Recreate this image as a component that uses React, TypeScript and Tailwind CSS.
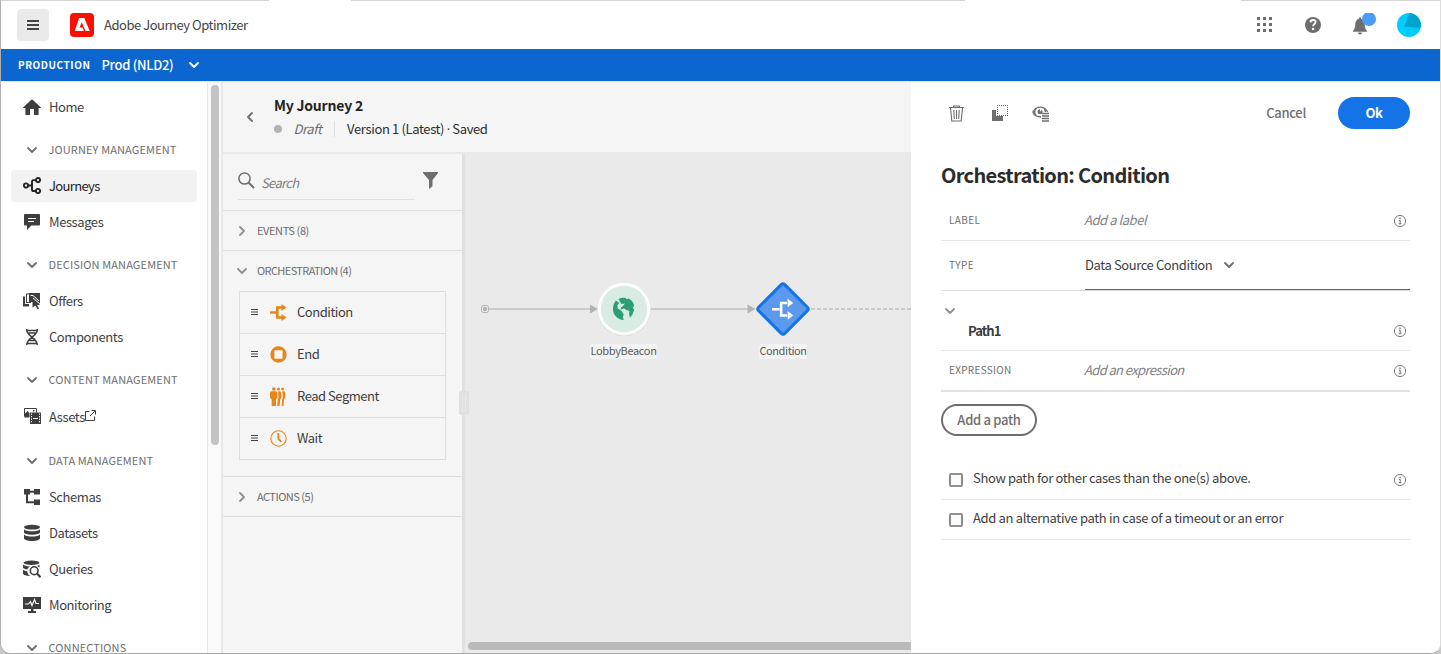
import React from "react";

const icons: Record<string, React.ReactNode> = {
  home: (
    <path d="M17.7 9.2 9.7 1.8a1 1 0 0 0-1.4 0L.3 9.2c-.4.4-.2.9.3.9H2.4v6.3c0 .4.2.6.6.6h4v-5.4c0-.3.2-.6.6-.6h2.8c.4 0 .6.3.6.6V17h4c.4 0 .6-.2.6-.6v-6.3h1.8c.5 0 .7-.5.3-.9Z" />
  ),
  journeys: (
    <g fill="none" stroke="currentColor" strokeWidth="1.9">
      <circle cx="3" cy="8.500" r="2.1" />
      <circle cx="15" cy="3.100" r="2.1" />
      <circle cx="15" cy="14" r="2.1" />
      <path d="M5 8.500h4M13 3.100h-2.400Q9 3.100 9 4.700v7.700q0 1.600 1.600 1.600H13" />
    </g>
  ),
  messages: (
    <>
      <path d="M2 1h14a1 1 0 0 1 1 1v9.600a1 1 0 0 1-1 1H8.300L4 17v-4.400H2a1 1 0 0 1-1-1V2a1 1 0 0 1 1-1Z" />
      <path d="M5 5.500h8M5 8.500h6" stroke="#fff" strokeWidth="1" />
    </>
  ),
  offers: (
    <>
      <path d="M0 4.500h2V12h4v2.500H0ZM3 1.500h3v1H4V10h4v1H3Z" />
      <path d="M6 1h11v10.500l-7-6V10H6Z" />
      <path d="m9.500 6 7.800 6.700-3.200.2 1.900 3.500-1.600.8-1.800-3.600-3.100 2Z" />
      <path d="M7.500 3.500h2.500l6 5.500" stroke="#fff" strokeWidth="1" fill="none" />
    </>
  ),
  components: (
    <path
      d="M3.700 1v1.200c0 5.800 10.600 7.800 10.600 14.800M14.300 1v1.200c0 5.800-10.600 7.800-10.600 14.800M4 2.500h10M5 5h8M6.500 12.500h5M4.500 15.500h9"
      fill="none"
      stroke="currentColor"
      strokeWidth="1.500"
    />
  ),
  assets: (
    <>
      <path d="M1.500 8.500v-8h12v4" fill="none" stroke="currentColor" />
      <path d="m1.500 6 3-3 2 2v4.500h-5ZM10 2h1.500v1.500H10Z" />
      <path d="M7 4.500h11V16H7Z" />
      <path d="M8.500 5.500v10M16.500 5.500v10" stroke="#fff" strokeDasharray="1.300 1.200" />
      <path d="M10 10.500h5" stroke="#fff" />
    </>
  ),
  schemas: (
    <>
      <path d="M1 1h6v5.500H1ZM11 1h6v5.500h-6ZM11 11.500h6V17h-6Z" />
      <path d="M6 3.800h6M4 5v9.200h8" fill="none" stroke="currentColor" strokeWidth="2" />
    </>
  ),
  datasets: (
    <>
      <ellipse cx="9" cy="3.200" rx="8" ry="2.400" />
      <path d="M1 5.300c1.300 1.400 4.300 2 8 2s6.700-.6 8-2v2.900c0 1.400-3.400 2.500-8 2.500S1 9.600 1 8.200Z" />
      <path d="M1 10.500c1.300 1.400 4.300 2 8 2s6.700-.6 8-2v3.700c0 1.600-3.400 2.800-8 2.800s-8-1.200-8-2.800Z" />
    </>
  ),
  queries: (
    <>
      <ellipse cx="8.500" cy="2.800" rx="8" ry="2.200" />
      <path d="M0 4.500c1.200 1.200 3.500 1.800 7 2-1.500.8-2.300 1.800-2.600 3C2 9.200.5 8.600 0 7.800ZM0 9.800c1 .8 2.500 1.200 4.200 1.400.2 2.200 1.300 3.900 3.200 4.800C3.500 15.900 0 15 0 13.500ZM14 5.900c1-.3 1.800-.6 2.500-1.200v2.800Z" />
      <circle cx="11.200" cy="10.700" r="3.900" fill="none" stroke="currentColor" strokeWidth="1.600" />
      <path d="m14 13.500 3.500 3.700" stroke="currentColor" strokeWidth="2.200" />
    </>
  ),
  monitoring: (
    <>
      <path d="M0 1h18v12H0Z" />
      <path d="M8 12h2.500v3H13v2H5v-2h3Z" />
      <path d="M2 8h3.500L7.500 5.500 9 9.500l2.500-6L13 7.500h3" fill="none" stroke="#fff" strokeWidth="1.200" />
    </>
  ),
};

function Icon({ name, className = "" }: { name: string; className?: string }) {
  return (
    <svg viewBox="0 0 18 18" fill="currentColor" className={`size-[18px] shrink-0 ${className}`}>
      {icons[name]}
    </svg>
  );
}

function Chevron({ className = "", width = 1.8 }: { className?: string; width?: number }) {
  return (
    <svg viewBox="0 0 10 10" fill="none" stroke="currentColor" strokeWidth={width} strokeLinecap="round" strokeLinejoin="round" className={`size-[10px] shrink-0 ${className}`}>
      <path d="m1 3 4 4 4-4" />
    </svg>
  );
}

function Info({ className = "" }: { className?: string }) {
  return (
    <svg viewBox="0 0 14 14" fill="none" stroke="currentColor" className={`size-[14px] shrink-0 text-[#6e6e6e] ${className}`}>
      <circle cx="7" cy="7" r="5.600" strokeWidth=".9" />
      <path d="M6 6.400h1.200v3.200M5.800 9.700h2.600" strokeWidth="1" />
      <path d="M6.300 4.500h1.400" strokeWidth="1.300" />
    </svg>
  );
}

function Section({ label }: { label: string }) {
  return (
    <div className="mt-[7px] flex h-9 items-center pl-[26px] text-[#6e6e6e]">
      <Chevron />
      <span className="mb-0.5 ml-[11.5px] text-[11px] leading-[8px] tracking-[0.12px]">{label}</span>
    </div>
  );
}

function NavItem({ icon, label, active }: { icon: string; label: string; active?: boolean }) {
  return (
    <div className="flex h-9 items-center pl-[10px]">
      <div className={`flex h-8 w-[186px] items-center gap-2 rounded pl-3 ${active ? "bg-[#f2f2f2] text-[#222]" : "text-[#3e3e3e]"}`}>
        <Icon name={icon} />
        <span className={`text-[13px] ${active ? "tracking-[-0.65px]" : "tracking-[-0.42px]"}`}>{label}</span>
        {icon === "assets" && (
          <svg viewBox="0 0 11 11" fill="none" stroke="currentColor" className="-ml-2 size-[11px] -translate-y-[2px]">
            <path d="M4.500 1.500h-4v9h9v-4M5 6l5-5M6.500.500h4v4" />
          </svg>
        )}
      </div>
    </div>
  );
}

function BranchArrows() {
  return (
    <>
      <path d="M0 8.500h6M12 3.500H7.300v10H12" fill="none" stroke="currentColor" strokeWidth="2.600" />
      <path d="m11.500 0 5 3.500-5 3.500ZM11.500 10l5 3.500-5 3.500Z" />
    </>
  );
}

const activityIcons: Record<string, React.ReactNode> = {
  Condition: <BranchArrows />,
  End: <path fillRule="evenodd" d="M8.500.300a8.200 8.200 0 1 1 0 16.400 8.200 8.200 0 0 1 0-16.400ZM5 4.300a.6.6 0 0 0-.6.6v7.200c0 .3.3.6.6.6h7c.4 0 .6-.3.6-.6V4.900a.6.6 0 0 0-.6-.6Z" />,
  "Read Segment": (
    <>
      <circle cx="12.500" cy="1" r="1.500" />
      <path d="M12.200 3.200h1.300c1.100 0 1.700.7 1.700 2V10l-1.100 1.200-.6 6.800h-1.800l.4-6.500.8-1.500Z" />
      <circle cx="8.500" cy="1" r="1.500" />
      <path d="M8.200 3.200h1.200c1.200 0 1.800.7 1.800 2V10l-1 1.200-.6 6.800H7.200l.6-6.500.7-1.500Z" />
      <circle cx="3.800" cy="1" r="1.800" />
      <path d="M1.900 3.200h3.700C6.900 3.200 7.400 4 7.400 5.200V10L6 11.200V18H1.700v-6.800L0 10V5.200C0 4 .6 3.200 1.900 3.200Z" />
    </>
  ),
  Wait: (
    <g fill="none" stroke="currentColor">
      <circle cx="8.500" cy="8.500" r="7.700" strokeWidth="1.100" />
      <path d="M8.300 3v5.600l3 3.200" strokeWidth="1.800" />
    </g>
  ),
};

function Activity({ label }: { label: string }) {
  return (
    <div className="flex h-[42px] items-center border-b border-[#dedede] pl-[11px] last:h-[41px] last:border-b-0">
      <svg viewBox="0 0 7 7" className="size-[7px] text-[#444]" stroke="currentColor">
        <path d="M0 .500h7M0 3h7M0 5.500h7" />
      </svg>
      <svg viewBox="0 0 17 17" fill="currentColor" className="ml-3 size-[17px] overflow-visible text-[#e68619]">
        {activityIcons[label]}
      </svg>
      <span className="mb-0.5 ml-[10px] text-[13px] tracking-[-0.47px] text-[#3e3e3e]">{label}</span>
    </div>
  );
}

function TopBar() {
  return (
    <header className="flex h-[49px] shrink-0 flex-col bg-white">
      <div className="flex h-px">
        <div className="w-[268px] bg-[#d5d5d8]" />
        <div className="w-[82px]" />
        <div className="w-[614px] bg-[#d5d5d8]" />
        <div className="w-[276px]" />
        <div className="flex-1 bg-[#d5d5d8]" />
      </div>
      <div className="flex flex-1 items-center pl-4 pr-[19px]">
        <button className="flex size-8 items-center justify-center rounded bg-[#eaeaea]">
          <svg viewBox="0 0 12 10" className="h-[10px] w-3" stroke="#444" strokeWidth="1.800">
            <path d="M0 1h12M0 5h12M0 9h12" />
          </svg>
        </button>
        <svg viewBox="0 0 24 24" className="ml-[21px] size-6">
          <rect width="24" height="24" rx="4" fill="#fa0f00" />
          <path d="M9.400 4.900h5.200L20 18h-4.200l-1.700-4.100h-.1L12.100 9.300l-2.300 5.300h3l1.400 3.400H5Z" fill="#fff" transform="translate(-.3 0)" />
        </svg>
        <span className="mb-px ml-[10px] text-[13px] tracking-[-0.47px] text-[#444]">Adobe Journey Optimizer</span>
        <div className="ml-auto flex items-center text-[#6e6e6e]">
          <svg viewBox="0 0 16 16" className="size-4" fill="currentColor">
            <path d="M0 0h3v3h-3ZM6 0h3v3h-3ZM12 0h3v3h-3ZM0 6h3v3h-3ZM6 6h3v3h-3ZM12 6h3v3h-3ZM0 12h3v3h-3ZM6 12h3v3h-3ZM12 12h3v3h-3Z" />
          </svg>
          <svg viewBox="0 0 16 16" className="ml-8 size-4">
            <circle cx="8" cy="8" r="8" fill="currentColor" />
            <path d="M5.400 5.300c.2-1.500 1.200-2.300 2.600-2.300 1.600 0 2.600.8 2.600 2.100 0 2-2.500 1.900-2.500 4.200" fill="none" stroke="#fff" strokeWidth="1.800" />
            <circle cx="8.100" cy="11.900" r="1.200" fill="#fff" />
          </svg>
          <svg viewBox="0 0 24 24" className="ml-[31px] size-6" fill="currentColor">
            <path d="M7 4.500h2v1.300c2.500.6 3.700 2.700 3.700 5.200 0 3.500.8 5.500 2.300 6.700v1H1v-1C2.500 16.500 3.300 14.500 3.300 11c0-2.500 1.200-4.600 3.700-5.200ZM6 19.500h4a2 2 0 0 1-4 0Z" />
            <circle cx="17" cy="6" r="7" fill="#4b9cf5" />
          </svg>
          <svg viewBox="0 0 24 24" className="ml-[21px] size-6">
            <circle cx="12" cy="12" r="12" fill="#00cdff" />
            <path d="M12.500 0A12 12 0 0 1 23.400 15L7 13.500Z" fill="#00a3cc" />
          </svg>
        </div>
      </div>
    </header>
  );
}

function Sidebar() {
  return (
    <>
      <nav className="h-full w-[206px] shrink-0 pt-[7px]">
        <NavItem icon="home" label="Home" />
        <Section label="JOURNEY MANAGEMENT" />
        <NavItem icon="journeys" label="Journeys" active />
        <NavItem icon="messages" label="Messages" />
        <Section label="DECISION MANAGEMENT" />
        <NavItem icon="offers" label="Offers" />
        <NavItem icon="components" label="Components" />
        <Section label="CONTENT MANAGEMENT" />
        <div className="py-px">
          <NavItem icon="assets" label="Assets" />
        </div>
        <Section label="DATA MANAGEMENT" />
        <NavItem icon="schemas" label="Schemas" />
        <NavItem icon="datasets" label="Datasets" />
        <NavItem icon="queries" label="Queries" />
        <NavItem icon="monitoring" label="Monitoring" />
        <Section label="CONNECTIONS" />
      </nav>
      <div className="h-full w-[14px] shrink-0 border-l border-[#e6e6e6] bg-[#fafafa] pl-[3px] pt-[3px]">
        <div className="h-[360px] w-2 rounded-full bg-[#c4c4c4]" />
      </div>
    </>
  );
}

function Palette() {
  return (
    <aside className="flex w-[242px] shrink-0 flex-col border-r-[3px] border-[#e0e0e0] bg-[#f5f5f5] text-[#6e6e6e]">
      <div className="flex h-[57px] border-b border-[#dedede] pl-[15px]">
        <div className="mt-[13px] flex h-[33px] w-[177px] items-center border-b border-[#dedede]">
          <svg viewBox="0 0 17 17" className="size-[17px] -translate-y-[3px]" fill="none" stroke="currentColor" strokeWidth="1.500">
            <circle cx="6.500" cy="6.500" r="5.600" />
            <path d="m10.500 10.500 5.500 5.500" strokeWidth="1.900" />
          </svg>
          <span className="ml-[6px] text-[13px] italic tracking-[-0.65px] text-[#808080]">Search</span>
        </div>
        <svg viewBox="0 0 16 17" className="ml-2 mt-[18px] h-[17px] w-4" fill="currentColor">
          <path d="M0 0h15v1L9.500 8v6.300L6 17V8L0 1Z" />
        </svg>
      </div>
      <div className="flex h-10 items-center border-b border-[#dedede] pl-[14px]">
        <Chevron className="-rotate-90 text-[#909090]" />
        <span className="ml-[10px] text-[11px] tracking-[-0.4px]">EVENTS (8)</span>
      </div>
      <div className="h-[226px] border-b border-[#dedede]">
        <div className="flex h-10 items-center pl-[14px]">
          <Chevron className="text-[#909090]" />
          <span className="mb-0.5 ml-[10px] text-[11px] tracking-[-0.6px]">ORCHESTRATION (4)</span>
        </div>
        <div className="ml-4 w-[207px] border border-[#dedede]">
          <Activity label="Condition" />
          <Activity label="End" />
          <Activity label="Read Segment" />
          <Activity label="Wait" />
        </div>
      </div>
      <div className="flex h-10 items-center border-b border-[#dedede] pl-[14px]">
        <Chevron className="-rotate-90 text-[#909090]" />
        <span className="ml-[10px] text-[11px] tracking-[-0.5px]">ACTIONS (5)</span>
      </div>
    </aside>
  );
}

function Canvas() {
  return (
    <div className="relative flex-1 bg-[#eaeaea]">
      <svg viewBox="0 0 447 300" className="absolute -left-px -top-px h-[300px] w-[447px]">
        <path d="M25 156h103M187 156h98" stroke="#cacaca" strokeWidth="2" />
        <path d="M347 156h100" stroke="#cacaca" strokeWidth="1.800" strokeDasharray="4 2" />
        <path d="M126 151.500l8 4.500-8 4.500ZM283.500 151.500l8 4.500-8 4.500Z" fill="#b3b3b3" />
        <rect x="17.500" y="152.500" width="7" height="7" rx="2" fill="#eaeaea" stroke="#b3b3b3" />
        <circle cx="21" cy="156" r="2.200" fill="#b3b3b3" />
        <circle cx="160" cy="156.700" r="26.500" fill="#dcdcdc" />
        <circle cx="160" cy="156" r="26.300" fill="#fff" />
        <circle cx="160" cy="156" r="23.300" fill="#d8ece4" />
        <g fill="#2d9d78">
          <path d="M152 147.500c-2 2.300-3 5.200-3 8.500 0 6 4.500 10.500 10.800 11l-1-3 1-2.500-2.200-3.500-3.800-2.500-.5-3 2-2.500Z" />
          <path d="M154.500 146c2-1 4.500-1.500 7-1.200l1 1.500 1.800-.8c3.500 1.500 5.200 4 5.700 7l-1 2.500 1.200 1.500-1.700 5-2.500 3-1-3.500.5-3-3-1-2.500-1.500-3.500 1 .5-2 2.500-2 1.500-2-3.500.5-2-3Z" />
        </g>
        <rect x="300.500" y="137.500" width="37" height="37" rx="2.500" transform="rotate(45 319 156)" fill="#5a99ec" stroke="#1473e6" strokeWidth="3" />
        <g transform="translate(308 145.500) scale(1.250)" color="#fff" fill="#fff">
          <path d="M0 8.500h6M12 3.500H7.300v10H12" fill="none" stroke="#fff" strokeWidth="2" />
          <path d="m12.500 0 4.500 3.500-4.500 3.500ZM12.500 10l4.500 3.500-4.500 3.500Z" />
        </g>
      </svg>
      <div className="absolute left-[125px] top-[190px] flex h-[15px] w-[67px] items-center justify-center rounded-[2px] bg-[#f3f3f3] pb-0.5 text-[11px] tracking-[-0.35px] text-[#5c5c5c]">LobbyBeacon</div>
      <div className="absolute left-[294px] top-[190px] flex h-[15px] w-[48px] items-center justify-center rounded-[2px] bg-[#f3f3f3] pb-0.5 text-[11px] tracking-[-0.4px] text-[#5c5c5c]">Condition</div>
      <div className="absolute bottom-[3px] left-[3px] right-0 h-2 rounded-l-full bg-[#bababa]" />
      <div className="absolute -left-[6px] top-[237px] flex h-6 w-[10px] items-center justify-center gap-[2px] rounded-[2px] bg-[#e0e0e0]">
        <span className="h-[18px] w-px bg-[#eaeaea]" />
        <span className="h-[18px] w-px bg-[#eaeaea]" />
      </div>
    </div>
  );
}

function Properties() {
  return (
    <section className="flex w-[529px] shrink-0 flex-col bg-white pl-[30px] pr-[30px]">
      <div className="flex h-[62px] items-center pl-2 text-[#6e6e6e]">
        <svg viewBox="0 0 16 17" className="h-[17px] w-4" fill="none" stroke="currentColor" strokeWidth="1.100">
          <path d="M0 2.500h15M4.500 2.500V1h6v1.500M1.500 3l1.300 13h9.400L13.500 3M4.800 5l.5 9M7.500 5v9M10.200 5l-.5 9" />
        </svg>
        <svg viewBox="0 0 16 16" className="ml-[27px] size-4">
          <path d="M0 5h4v6h7v5H0Z" fill="currentColor" />
          <path d="M5 .500h11M5 10.500h11M5.500 2v9M15.500 2v9" fill="none" stroke="currentColor" strokeDasharray="1 1" />
        </svg>
        <svg viewBox="0 0 18 17" className="ml-6 h-[17px] w-[18px]" fill="none" stroke="currentColor">
          <path d="M9 11.700C5 12 2 10 .800 7 2.500 4 5 2.200 8.300 2.200S14 4 15.800 7" strokeWidth="1.300" />
          <path d="M4.200 3.400A5.200 5.200 0 0 0 4 10.500" strokeWidth="1.600" />
          <path d="M12.300 3.400q1.200 1.500 1.200 3.600" strokeWidth="1.600" />
          <circle cx="8" cy="6.700" r="2.500" fill="currentColor" stroke="none" />
          <path d="M8 6.700V4h2.700Z" fill="#fff" stroke="none" />
          <path d="M10 8.500h7M10 11h7M10 13.500h7M10 16h7" strokeWidth="1.300" />
        </svg>
        <button className="ml-auto text-[13px] font-medium tracking-[-0.3px]">Cancel</button>
        <button className="ml-8 h-8 w-[72px] rounded-full bg-[#1473e6] text-[13px] font-bold tracking-[-0.5px] text-white">Ok</button>
      </div>
      <h1 className="mt-[15px] flex h-[32px] items-center whitespace-nowrap text-[20px] font-bold tracking-[-0.67px] text-[#2c2c2c]">Orchestration: Condition</h1>
      <div className="mt-[10px] flex h-10 items-center border-b border-[#e6e6e6] pl-2 pr-[3px]">
        <span className="mb-0.5 w-[135px] text-[10px] tracking-[0.4px] text-[#6e6e6e]">LABEL</span>
        <span className="mb-0.5 text-[13px] italic tracking-[-0.45px] text-[#808080]">Add a label</span>
        <Info className="ml-auto" />
      </div>
      <div className="flex h-[50px] border-b border-[#dcdcdc]">
        <div className="flex w-36 items-center pb-0.5 pl-2 text-[10px] tracking-[0.4px] text-[#6e6e6e]">TYPE</div>
        <div className="flex flex-1 items-center border-b border-[#1473e6] text-[#3e3e3e]">
          <span className="text-[13px] tracking-[-0.4px]">Data Source Condition</span>
          <Chevron className="ml-3 text-[#6e6e6e]" />
        </div>
      </div>
      <div className="flex h-[60px] flex-col border-b border-[#e6e6e6] pr-[3px]">
        <Chevron className="ml-1 mt-[15px] text-[#909090]" />
        <div className="mt-[3px] flex h-6 items-center pl-[27px]">
          <span className="mb-px text-[13px] font-bold tracking-[-0.9px] text-[#3a3a3a]">Path1</span>
          <Info className="ml-auto" />
        </div>
      </div>
      <div className="flex h-[41px] items-center border-b-2 border-[#e1e1e1] pl-2 pr-[3px]">
        <span className="mb-0.5 w-[135px] text-[10px] tracking-[0.3px] text-[#6e6e6e]">EXPRESSION</span>
        <span className="mb-0.5 text-[13px] italic tracking-[-0.63px] text-[#808080]">Add an expression</span>
        <Info className="ml-auto" />
      </div>
      <button className="mt-3 h-8 w-24 rounded-full border-2 border-[#6e6e6e] text-[13px] font-medium tracking-[-0.3px] text-[#6e6e6e]">Add a path</button>
      <div className="mt-6 flex h-10 items-center border-b border-[#e6e6e6] pl-2 pr-[3px]">
        <span className="size-[14px] rounded-[2px] border-2 border-[#8e8e8e] bg-[#fafafa]" />
        <span className="mb-1 ml-[10px] text-[13px] tracking-[-0.35px] text-[#3e3e3e]">Show path for other cases than the one(s) above.</span>
        <Info className="ml-auto" />
      </div>
      <div className="flex h-10 items-center border-b border-[#e6e6e6] pl-2">
        <span className="size-[14px] rounded-[2px] border-2 border-[#8e8e8e] bg-[#fafafa]" />
        <span className="mb-1 ml-[10px] text-[13px] tracking-[-0.34px] text-[#3e3e3e]">Add an alternative path in case of a timeout or an error</span>
      </div>
    </section>
  );
}

export default function App() {
  return (
    <div className="h-[654px] w-[1441px] overflow-hidden bg-[#c8c8c8]">
      <div className="flex h-full flex-col overflow-hidden rounded-b-[10px] border-b border-l border-r border-b-[#a9a9a9] border-l-[#b0b0b0] border-r-[#dcdcdc] bg-white font-['Noto_Sans_CJK_SC',sans-serif]">
        <TopBar />
        <div className="flex h-8 shrink-0 items-center bg-[#0b66d0] pl-[17px] text-white">
          <span className="mb-0.5 text-[10px] font-bold tracking-[0.55px]">PRODUCTION</span>
          <span className="ml-[11px] text-[13px] font-medium tracking-[-0.3px]">Prod (NLD2)</span>
          <Chevron className="ml-4" />
        </div>
        <div className="flex min-h-0 flex-1 border-t border-[#dfe6ee]">
          <Sidebar />
          <main className="flex min-w-0 flex-1 border-l-2 border-[#e8e8e8]">
            <div className="flex min-w-0 flex-1 flex-col">
              <div className="flex h-[72px] shrink-0 items-center border-b-2 border-[#e9e9e9] bg-[#f5f5f5] pl-[22px]">
                <Chevron className="rotate-90 text-[#6e6e6e]" />
                <div className="ml-[19px] flex flex-col">
                  <div className="flex h-6 items-center text-[14px] font-bold tracking-[-0.2px] text-[#222]">My Journey 2</div>
                  <div className="flex h-6 items-center text-[13px]">
                    <span className="size-2 rounded-full bg-[#b3b3b3]" />
                    <span className="ml-[11.5px] italic tracking-[-0.4px] text-[#6e6e6e]">Draft</span>
                    <span className="ml-3 h-4 w-px bg-[#e0e0e0]" />
                    <span className="ml-[12.5px] whitespace-nowrap tracking-[-0.36px] text-[#2c2c2c]">
                      Version 1 (Latest) <span className="font-['Open_Sans']">·</span> Saved
                    </span>
                  </div>
                </div>
              </div>
              <div className="flex min-h-0 flex-1">
                <Palette />
                <Canvas />
              </div>
            </div>
            <Properties />
          </main>
        </div>
      </div>
    </div>
  );
}
